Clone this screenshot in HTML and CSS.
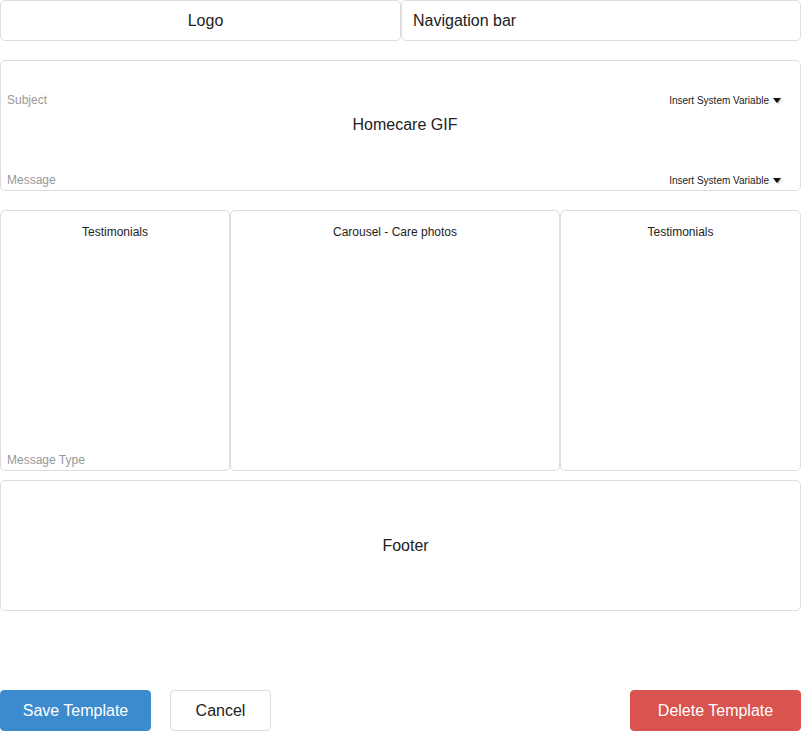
FILE: index.html
```html
<!DOCTYPE html>
<html>
<head>
<meta charset="utf-8">
<link rel="stylesheet" href="styles.css">
</head>
<body>
<div class="page">
  <div class="header">
    <div class="box logo">Logo</div>
    <div class="box nav">Navigation bar</div>
  </div>
  <div class="box hero">
    <div class="field-row">
      <span class="label">Subject</span>
      <span class="var">Insert System Variable <span class="caret"></span></span>
    </div>
    <div class="hero-title">Homecare GIF</div>
    <div class="field-row">
      <span class="label">Message</span>
      <span class="var">Insert System Variable <span class="caret"></span></span>
    </div>
  </div>
  <div class="columns">
    <div class="box col col-left">
      <div class="col-title">Testimonials</div>
      <div class="label">Message Type</div>
    </div>
    <div class="box col col-mid">
      <div class="col-title">Carousel - Care photos</div>
    </div>
    <div class="box col col-right">
      <div class="col-title">Testimonials</div>
    </div>
  </div>
  <div class="box footer">Footer</div>
  <div class="actions">
    <button class="btn btn-primary">Save Template</button>
    <button class="btn btn-default">Cancel</button>
    <button class="btn btn-danger">Delete Template</button>
  </div>
</div>
</body>
</html>
```
FILE: styles.css
```css
* { box-sizing: border-box; }
html, body { margin: 0; padding: 0; background: #fff; }
body { font-family: "Liberation Sans", Arial, sans-serif; color: #222; }
.page { width: 801px; display: flex; flex-direction: column; }
.box { border: 1px solid #ddd; border-radius: 5px; background: #fff; }
.header { display: flex; height: 41px; }
.logo { width: 401px; display: flex; align-items: center; justify-content: center; font-size: 16px; padding-left: 10px; }
.nav { flex: 1; display: flex; align-items: center; padding-left: 11px; font-size: 16px; }
.hero { margin-top: 19px; height: 131px; display: flex; flex-direction: column; padding: 31px 19px 2px 6px; }
.field-row { display: flex; justify-content: space-between; align-items: center; height: 16px; }
.label { font-size: 12px; color: #999; }
.var { font-size: 10px; color: #222; display: flex; align-items: center; }
.caret { display: inline-block; width: 0; height: 0; border-left: 4px solid transparent; border-right: 4px solid transparent; border-top: 5px solid #111; margin-left: 4px; filter: drop-shadow(1px 1px 1px rgba(0,0,0,0.3)); }
.hero-title { flex: 1; display: flex; align-items: center; justify-content: center; font-size: 16px; padding-left: 22px; padding-bottom: 30px; }
.columns { display: flex; margin-top: 19px; height: 261px; }
.col { display: flex; flex-direction: column; justify-content: space-between; padding: 14px 6px 3px 6px; }
.col-left { width: 230px; }
.col-mid { width: 330px; }
.col-right { flex: 1; }
.col-title { text-align: center; font-size: 12px; color: #222; }
.col .label { text-align: left; }
.footer { margin-top: 9px; height: 131px; display: flex; align-items: center; justify-content: center; font-size: 16px; padding-left: 10px; }
.actions { display: flex; margin-top: 79px; height: 41px; }
.btn { font-family: "Liberation Sans", Arial, sans-serif; font-size: 16px; height: 41px; border-radius: 4px; border: 1px solid #ddd; cursor: pointer; }
.btn-primary { width: 151px; background: #3c8bcf; border-color: #3c8bcf; color: #fff; }
.btn-default { width: 101px; margin-left: 19px; background: #fff; color: #222; }
.btn-danger { width: 171px; margin-left: auto; background: #d9534f; border-color: #d9534f; color: #fff; }
```
